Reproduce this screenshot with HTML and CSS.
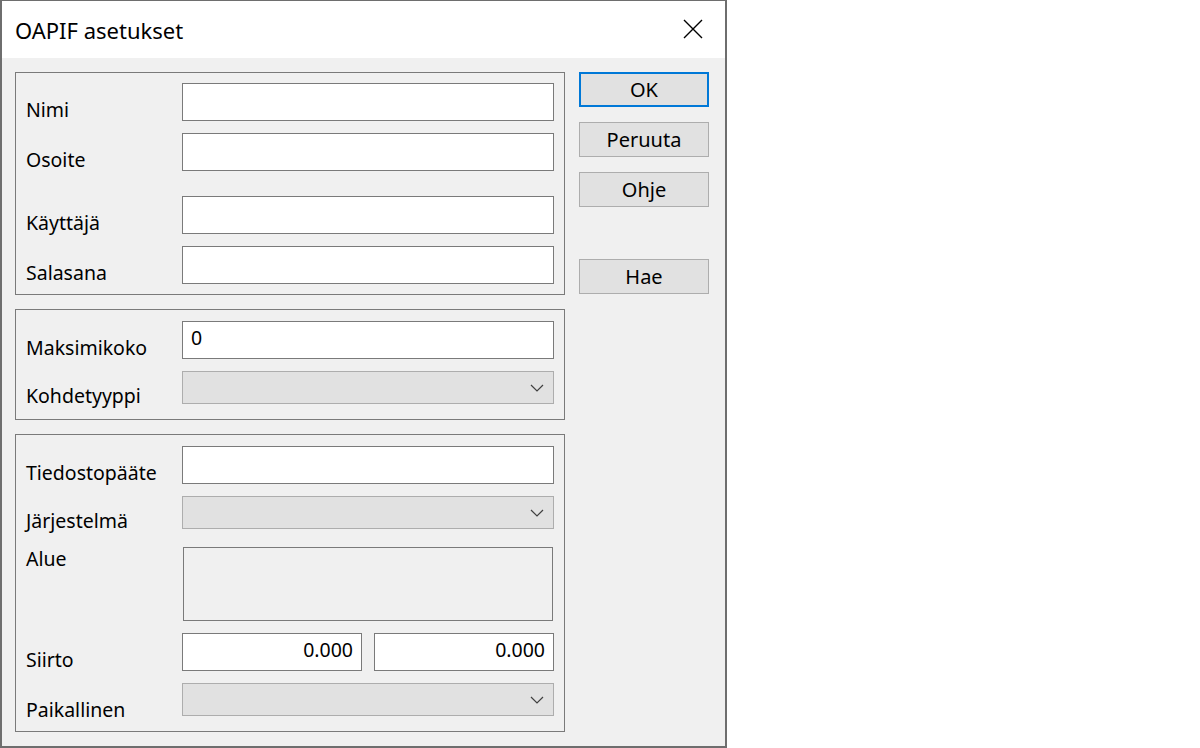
FILE: index.html
```html
<!DOCTYPE html>
<html lang="fi">
<head>
    <meta charset="UTF-8">
    <title>OAPIF asetukset</title>
    <link rel="stylesheet" href="styles.css">
</head>
<body>
    <div class="dialog">
        <div class="titlebar">
            <span class="title">OAPIF asetukset</span>
            <svg class="close" width="20" height="20" viewBox="0 0 20 20">
                <path d="M1 1 L19 19 M19 1 L1 19" stroke="#000" stroke-width="1.4" fill="none"/>
            </svg>
        </div>
        <div class="content">
            <div class="groups">
                <div class="group group-top">
                    <div class="row">
                        <div class="label">Nimi</div>
                        <div class="edit"></div>
                    </div>
                    <div class="row">
                        <div class="label">Osoite</div>
                        <div class="edit"></div>
                    </div>
                    <div class="row row-spaced">
                        <div class="label">Käyttäjä</div>
                        <div class="edit"></div>
                    </div>
                    <div class="row">
                        <div class="label">Salasana</div>
                        <div class="edit"></div>
                    </div>
                </div>
                <div class="group">
                    <div class="row">
                        <div class="label">Maksimikoko</div>
                        <div class="edit">0</div>
                    </div>
                    <div class="row">
                        <div class="label label-combo">Kohdetyyppi</div>
                        <div class="combo">
                            <svg width="14" height="8" viewBox="0 0 14 8"><polyline points="1,1 7,7 13,1" fill="none" stroke="#404040" stroke-width="1.2"/></svg>
                        </div>
                    </div>
                </div>
                <div class="group">
                    <div class="row">
                        <div class="label">Tiedostopääte</div>
                        <div class="edit"></div>
                    </div>
                    <div class="row">
                        <div class="label label-combo">Järjestelmä</div>
                        <div class="combo">
                            <svg width="14" height="8" viewBox="0 0 14 8"><polyline points="1,1 7,7 13,1" fill="none" stroke="#404040" stroke-width="1.2"/></svg>
                        </div>
                    </div>
                    <div class="row row-area">
                        <div class="label label-area">Alue</div>
                        <div class="area"></div>
                    </div>
                    <div class="row">
                        <div class="label">Siirto</div>
                        <div class="pair">
                            <div class="edit num">0.000</div>
                            <div class="edit num">0.000</div>
                        </div>
                    </div>
                    <div class="row">
                        <div class="label">Paikallinen</div>
                        <div class="combo">
                            <svg width="14" height="8" viewBox="0 0 14 8"><polyline points="1,1 7,7 13,1" fill="none" stroke="#404040" stroke-width="1.2"/></svg>
                        </div>
                    </div>
                </div>
            </div>
            <div class="buttons">
                <button class="btn default">OK</button>
                <button class="btn">Peruuta</button>
                <button class="btn">Ohje</button>
                <button class="btn btn-apart">Hae</button>
            </div>
        </div>
    </div>
</body>
</html>
```

FILE: styles.css
```css
body {
    margin: 0;
    background-color: #ffffff;
    font-family: 'Noto Sans', 'Open Sans', sans-serif;
    font-size: 19.5px;
    color: #000;
}

.dialog {
    box-sizing: border-box;
    width: 727px;
    height: 748px;
    border: 2px solid #6e6e6e;
    border-top-width: 1px;
    display: flex;
    flex-direction: column;
}

.titlebar {
    height: 57px;
    background-color: #fff;
    display: flex;
    align-items: center;
    justify-content: space-between;
    padding: 0 22px 0 13px;
    flex-shrink: 0;
}

.title {
    font-size: 22px;
}

.close {
    margin-top: -2px;
}

.content {
    flex: 1;
    background-color: #f0f0f0;
    display: flex;
    gap: 14px;
    padding: 14px 16px 0 13px;
}

.groups {
    width: 550px;
    display: flex;
    flex-direction: column;
    gap: 14px;
}

.group {
    box-sizing: border-box;
    border: 1px solid #7a7a7a;
    padding: 11px 10px 15px 10px;
    display: flex;
    flex-direction: column;
    gap: 12px;
}

.group-top {
    padding-top: 10px;
    padding-bottom: 10px;
}

.row {
    display: flex;
    align-items: flex-start;
}

.row-spaced {
    margin-top: 13px;
}

.row-area {
    margin-top: 6px;
}

/* labels sit low next to their field; negative margin keeps them out of the row height */
.label {
    width: 156px;
    flex-shrink: 0;
    line-height: 24px;
    padding-top: 15px;
    margin-bottom: -20px;
    white-space: nowrap;
}

.label-combo {
    padding-top: 13px;
}

.label-area {
    padding-top: 0;
}

.edit {
    box-sizing: border-box;
    width: 372px;
    height: 38px;
    background-color: #fff;
    border: 1px solid #7a7a7a;
    padding: 0 8px;
    line-height: 32px;
}

.num {
    width: 180px;
    text-align: right;
}

.pair {
    display: flex;
    gap: 12px;
}

.combo {
    box-sizing: border-box;
    width: 372px;
    height: 33px;
    background-color: #e1e1e1;
    border: 1px solid #adadad;
    display: flex;
    align-items: center;
    justify-content: flex-end;
    padding-right: 9px;
}

.area {
    box-sizing: border-box;
    width: 370px;
    height: 74px;
    margin-left: 1px;
    border: 1px solid #7a7a7a;
    background-color: #f0f0f0;
}

.buttons {
    width: 130px;
    display: flex;
    flex-direction: column;
    gap: 15px;
}

.btn {
    box-sizing: border-box;
    height: 35px;
    width: 130px;
    background-color: #e1e1e1;
    border: 1px solid #adadad;
    font-family: inherit;
    font-size: 20px;
    color: #000;
    padding: 0;
    line-height: 30px;
}

.btn.default {
    border: 2px solid #0078d7;
}

.btn-apart {
    margin-top: 37px;
}
```
